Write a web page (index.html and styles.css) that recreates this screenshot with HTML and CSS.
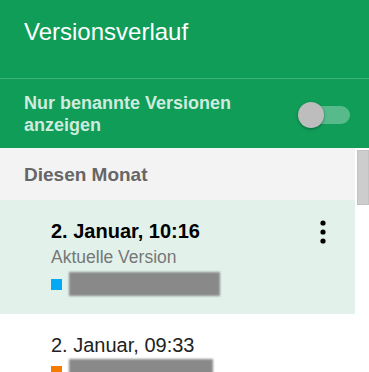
FILE: index.html
```html
<!DOCTYPE html>
<html lang="de">
<head>
    <meta charset="UTF-8">
    <meta name="viewport" content="width=device-width, initial-scale=1.0">
    <title>Versionsverlauf</title>
    <link rel="stylesheet" href="styles.css">
</head>
<body>
    <div class="panel">
        <div class="header">
            <h1>Versionsverlauf</h1>
        </div>
        <div class="filter">
            <span class="filter-label">Nur benannte Versionen anzeigen</span>
            <div class="switch">
                <div class="switch-track"></div>
                <div class="switch-knob"></div>
            </div>
        </div>

        <div class="body">
            <div class="list">
                <div class="section">Diesen Monat</div>

                <div class="version selected">
                    <div class="version-info">
                        <div class="version-date">2. Januar, 10:16</div>
                        <div class="version-note">Aktuelle Version</div>
                        <div class="author">
                            <span class="swatch blue"></span>
                            <span class="author-name wide"></span>
                        </div>
                    </div>
                    <svg class="more" width="6" height="26" viewBox="0 0 6 26">
                        <circle cx="3" cy="3" r="2.6" fill="#000"/>
                        <circle cx="3" cy="12" r="2.6" fill="#000"/>
                        <circle cx="3" cy="21" r="2.6" fill="#000"/>
                    </svg>
                </div>

                <div class="version">
                    <div class="version-info">
                        <div class="version-date">2. Januar, 09:33</div>
                        <div class="author">
                            <span class="swatch orange"></span>
                            <span class="author-name"></span>
                        </div>
                    </div>
                </div>
            </div>
            <div class="scrollbar">
                <div class="scrollbar-thumb"></div>
            </div>
        </div>
    </div>
</body>
</html>
```
FILE: styles.css
```css
body {
    margin: 0;
    font-family: "Liberation Sans", Arial, sans-serif;
    background: #fff;
    overflow: hidden;
}

.panel {
    width: 369px;
    height: 372px;
    overflow: hidden;
}

.header {
    height: 79px;
    box-sizing: border-box;
    padding: 18px 24px 0;
    background-color: #0f9d58;
    border-bottom: 1px solid #3fb17a;
}

.header h1 {
    margin: 0;
    font-size: 24px;
    font-weight: normal;
    color: #fff;
}

.filter {
    display: flex;
    align-items: center;
    height: 69px;
    box-sizing: border-box;
    padding: 14px 19px 12px 24px;
    background-color: #0f9d58;
}

.filter-label {
    flex: 1;
    max-width: 230px;
    font-size: 18px;
    font-weight: bold;
    line-height: 21.5px;
    color: #cfebde;
}

.switch {
    position: relative;
    width: 52px;
    height: 26px;
    margin-left: auto;
}

.switch-track {
    position: absolute;
    left: 12px;
    top: 4px;
    width: 40px;
    height: 18px;
    border-radius: 9px;
    background-color: rgba(255, 255, 255, 0.3);
}

.switch-knob {
    position: absolute;
    left: 0;
    top: 0;
    width: 26px;
    height: 26px;
    border-radius: 50%;
    background-color: #bdbdbd;
    box-shadow: 0 1px 3px rgba(0, 0, 0, 0.35);
}

.body {
    display: flex;
    height: 224px;
}

.list {
    flex: 1;
}

.scrollbar {
    width: 14px;
    background: #fff;
}

.scrollbar-thumb {
    height: 55px;
    margin: 2px 0 0 2px;
    background-color: #cdcdcd;
    border: 1px solid #c2c2c2;
    box-sizing: border-box;
}

.section {
    height: 52px;
    box-sizing: border-box;
    padding: 16px 24px 0;
    background-color: #f3f3f3;
    font-size: 19px;
    font-weight: bold;
    color: #666;
}

.version {
    display: flex;
    align-items: flex-start;
    padding: 20px 29px 17px 51px;
}

.version.selected {
    background-color: #e2f2ea;
}

.version-info {
    flex: 1;
}

.version-date {
    font-size: 20px;
    color: #222;
}

.selected .version-date {
    font-weight: bold;
    color: #000;
}

.version-note {
    margin-top: 4px;
    font-size: 17.5px;
    color: #777;
}

.author {
    display: flex;
    align-items: center;
    height: 26px;
    margin-top: 3px;
}

.version:not(.selected) .author {
    margin-top: 1px;
}

.swatch {
    width: 11px;
    height: 11px;
    margin-right: 7px;
}

.swatch.blue {
    background-color: #03a9f4;
}

.swatch.orange {
    background-color: #f57c00;
}

.author-name {
    width: 144px;
    height: 24px;
    background-color: #898989;
    filter: blur(1px);
}

.author-name.wide {
    width: 151px;
}

.more {
    margin-top: 0;
    display: block;
}
```
